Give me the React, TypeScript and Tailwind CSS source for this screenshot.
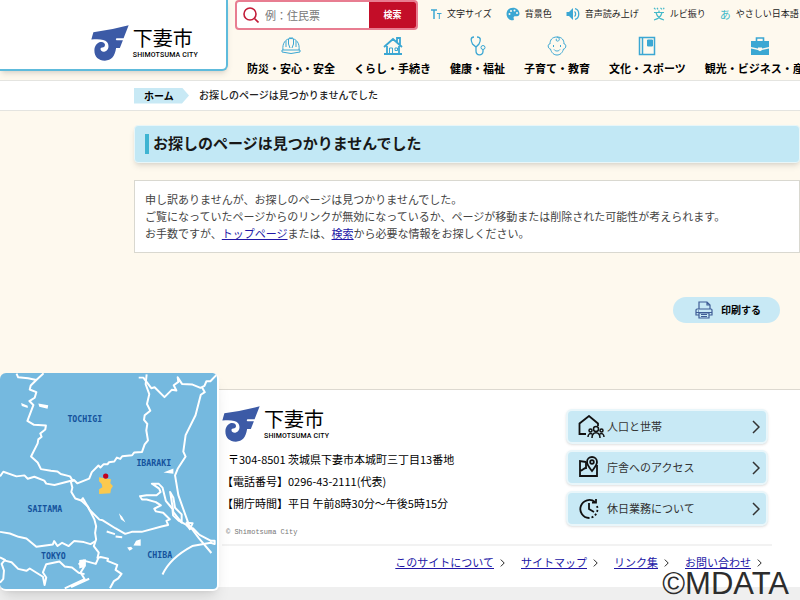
import type { ReactNode } from "react";

const LINE = "#3ba7d3";

function CityLogo() {
  return (
    <span className="flex items-center gap-1">
      <svg viewBox="277 52 112 106" className="h-9 w-[38px] shrink-0" aria-hidden="true">
        <path
          fill="#3c5aa6"
          d="M284 73 Q338 67 388 53 L373 91 H352 Q348 94 352 97 H371 L362 120 H351 C347 145 337 157 318 157 C299 157 287 145 287 127 C287 113 295 104 305 102 C315 101 321 108 317 115 C313 119 307 116 305 121 C304 128 311 132 318 130 C329 127 332 112 324 102 C317 95 304 93 278 95 Z"
        />
      </svg>
      <span className="flex flex-col text-black">
        <span className="text-[20px] leading-6 font-normal">下妻市</span>
        <span className="font-[Roboto,sans-serif] text-[7px] leading-[10px] font-medium tracking-wide whitespace-nowrap">SHIMOTSUMA CITY</span>
      </span>
    </span>
  );
}

// ---- header tools ----

const tools: { label: string; icon: ReactNode }[] = [
  {
    label: "文字サイズ",
    icon: (
      <svg viewBox="0 0 12 12" className="h-3 w-3" fill="none" stroke={LINE}>
        <path d="M1 2h6M4 2v9" strokeWidth="1.5" />
        <path d="M7 5.5h4.500M9.300 5.500V11" />
      </svg>
    ),
  },
  {
    label: "背景色",
    icon: (
      <svg viewBox="0 0 14 14" className="h-3.5 w-3.5">
        <path fill={LINE} d="M7 .7C3 .7.500 3.600.500 7c0 3.500 2.700 6.300 6 6.300 1.400 0 1.700-1 1.200-1.900C7.200 10.300 8 9.300 9.100 9.300h2c1.500 0 2.400-1 2.400-2.500C13.500 3.200 10.600.7 7 .7Z" />
        <g fill="#fef9ee">
          <circle cx="3.500" cy="7" r="1" />
          <circle cx="5" cy="3.900" r="1" />
          <circle cx="8.500" cy="3.500" r="1" />
          <circle cx="11" cy="6" r="1" />
        </g>
      </svg>
    ),
  },
  {
    label: "音声読み上げ",
    icon: (
      <svg viewBox="0 0 14 14" className="h-3.5 w-3.5" fill="none" stroke={LINE}>
        <path d="M.5 5H3l4-4v12L3 9H.5Z" fill={LINE} stroke="none" />
        <path d="M8.500 4.500c1.500 1 1.500 4 0 5M9 1.700c5 1 5 9.600 0 10.600" strokeWidth="1.300" />
      </svg>
    ),
  },
  {
    label: "ルビ振り",
    icon: (
      <svg viewBox="0 0 12 14" className="h-3.5 w-3" fill="none" stroke="#43b9c9" strokeWidth="1.200">
        <path d="M1 .8l1.500 1.500M4 .8l1 1.500M7.500.8L9 2.300M10.500.8l.5 1.500M1 5.500h10M6 3.500v2M9 5.500C8 9.500 5 12 1 13M3 5.500c1 4 4 6.500 8 7.500" />
      </svg>
    ),
  },
  { label: "やさしい日本語", icon: <span className="text-[11px] text-[#43b9c9]">あ</span> },
];

// ---- main navigation ----

const navItems: { label: string; icon: ReactNode }[] = [
  {
    label: "防災・安心・安全",
    icon: <path d="M1 14h18v2q-9 3-18 0ZM2 14C1 7 5 2.500 10 2.500s9 4.500 8 11.500M7.500 3v5l1.500 4M12.500 3v5L11 12M8 2h4M5 5v6M15 5v6" />,
  },
  {
    label: "くらし・手続き",
    icon: (
      <>
        <path d="M1 11L10 3l9 8M14 6V2h3v7M4 10v8M16 10v8M1 18h18" strokeWidth="1.800" />
        <path d="M6.500 18v-6H9.500v6M12 12h2.500v2.500H12Z" />
      </>
    ),
  },
  {
    label: "健康・福祉",
    icon: (
      <>
        <path d="M6 1C2 1 3 5 4.500 8L8 11l3-3c2-4 2-7-2-7M8 11v4c0 5 7 5 7 .5v-2" strokeWidth="1.300" />
        <circle cx="15" cy="11.500" r="2" />
      </>
    ),
  },
  {
    label: "子育て・教育",
    icon: (
      <>
        <path d="M10 1C5 1 3 4 3 8c-3 0-2 5 .5 5 1 4 3.500 6 6.500 6s5.500-2 6.500-6C19 13 20 8 17 8c0-4-2-7-7-7Z" />
        <path d="M10 1c4 1 2 5 0 4-1.500-.5-1-2 0-2M6.500 9v2M13.500 9v2M7 13.500c1.500 2 4.500 2 6 0" />
      </>
    ),
  },
  {
    label: "文化・スポーツ",
    icon: (
      <>
        <path d="M2.500 1.500h15v17h-15ZM5.500 1.500v17" strokeWidth="1.500" />
        <path d="M10.500 4h5v6h-5Z" fill={LINE} />
      </>
    ),
  },
  {
    label: "観光・ビジネス・産業",
    icon: (
      <>
        <path d="M6.500 5V2h7v3" strokeWidth="1.600" />
        <path d="M1 5h18v6l-7 1.500v-1H8v1L1 11ZM1 12.500l7 1.500c1 1.500 3 1.500 4 0l7-1.500V19H1Z" fill={LINE} stroke="none" />
      </>
    ),
  },
];

function SiteHeader() {
  return (
    <header className="flex h-20 overflow-hidden">
      <a href="#" className="flex h-[71px] w-[228px] shrink-0 justify-end rounded-br-md border-r-2 border-b-2 border-[#5ebbdc] bg-white pt-[17px] pr-7 shadow-md">
        <CityLogo />
      </a>
      <div className="min-w-0 flex-1 whitespace-nowrap">
        <div className="flex h-[30px] items-center pl-[7px]">
          <form className="flex h-[30px] w-[183px] shrink-0 overflow-hidden rounded border-2 border-[#e87d91] bg-white">
            <label htmlFor="q" className="flex w-7 items-center justify-center">
              <svg viewBox="0 0 16 16" className="h-4 w-4" fill="none" stroke="#c21b38" strokeWidth="1.600" aria-label="検索">
                <circle cx="7" cy="7" r="6" />
                <path d="M11.500 11.500L15.500 15.500" />
              </svg>
            </label>
            <input id="q" type="text" placeholder="例：住民票" className="min-w-0 flex-1 text-[11px] outline-none placeholder:text-[#777]" />
            <button type="button" className="w-[47px] bg-[#c30d28] text-[9px] font-bold text-white">検索</button>
          </form>
          <ul className="ml-3 flex items-center gap-3.5 pb-0.5 text-[9px] text-[#222]">
            {tools.map((t) => (
              <li key={t.label} className="shrink-0">
                <a href="#" className="flex items-center gap-[5px]">
                  {t.icon}
                  {t.label}
                </a>
              </li>
            ))}
          </ul>
        </div>
        <nav className="pt-1.5 pl-[19px]">
          <ul className="flex gap-[19px]">
            {navItems.map((n) => (
              <li key={n.label} className="shrink-0">
                <a href="#" className="flex flex-col items-center gap-1 text-[11px] leading-4 font-bold text-black">
                  <svg viewBox="0 0 20 20" className="h-5 w-5" fill="none" stroke={LINE}>
                    {n.icon}
                  </svg>
                  {n.label}
                </a>
              </li>
            ))}
          </ul>
        </nav>
      </div>
    </header>
  );
}

function AreaMap() {
  return (
    <svg viewBox="0 22 657 654" className="h-[218px] w-[219px] rounded-md border-r-2 border-b-2 border-white bg-[#75b9df] shadow-lg" role="img" aria-label="下妻市の位置">
      <g fill="none" stroke="#fff" strokeWidth="6" strokeLinejoin="round">
        <path d="M50 24l5 11 30 3 25 5 22-20M110 43L93 60l-3 12 20 8-5 17-16 10 12 12-18 48 20 12 36 2-2 12-15 12 4 10-10 8-2 12-20 40 20 18 10 20 30 5 20 2 10 8 28 7 10 16" />
        <path d="M0 335l10-14 40 14 24-3 10 10 20-6 30 12 6 9 25 4 47-12 12-3 10 10 36-14 8-20 20-20 6 6 10-10h12l4-6 16-2 8-12 10 4 6-8 30-3 6-8 24-2 8-23 10-12-5-30 3-20-10-12 2-14 17-14-10-20 7-30-11-30 3-30" />
        <path d="M420 36h14l24 32 10-3 30 30 22-22 14 2-8-16 14-10-2-14 13 20 32 2 24 10 12-6 6-14h12l20-21M612 66l8 14-12 8-16 62-30 60-7 50 7 15-24 37-8 20 10 60 32 90 30 40 38 45" />
        <path d="M214 349l5 20-3 13 12 20 18 6 5-7 20 35 30 30 10 2 38 24 30 17 20-6h30l60-16 20-5-5-12 10-5-20-20-22-4-5-8 20-10-15-10-28-8h-14l-6-10 20-3h30l12-10-4-10-22-15h20l12 12 10 40 20 24 2 20 18 17 20 10 12 12h10l20 20 35 18h11v10l-12-4-56 10c-28 15-70 42-90 86" />
        <path d="M246 408l20 18 20 40 5 20-3 20 3 20-7 20 15 20-4 16 10-3 22 5-2 7 30 12-5 15 18 12-10 14-13 8-12 22M298 582l-8 18-36-10-14 10 14 10-10 16 12 20-60 28M215 670l55-25" />
        <path d="M0 503l30 5 26 10 24 5 30 25 50-7 4-10 10 15 14-10 20 10 16-15 30 3 20 6 14-8M0 580l15 8-10 12 7 20-2 25-10 12M15 590l20 5 20 20 25 6 10-7 40 25 5 25 5-23-10-15 10-25 40-8 16 15 22 3 20 16 18 4" />
        <path d="M515 382l10 18 5 30 20 20v25l-25-32ZM565 475l10 20 8-18ZM323 502l25 8M350 517l20 2" />
      </g>
      <g fill="#fff">
        <path d="M64 113l20 8v7l-18-6ZM116 114l30 6-2 10-25-6ZM495 323l30-12v16ZM360 447l10 10 10 18-14-10ZM385 550l12-2 5 6-10 6ZM412 530l14-5v20l-22-1ZM240 588l20-2v22l-20 6Z" />
      </g>
      <path fill="#fbc94e" d="M300 338l16 3 20 3-2 12 8 8-6 10-2 12-34 2v-14l10-6-2-10-8-8Z" />
      <circle cx="320" cy="334" r="8" fill="#c4001c" />
      <g fill="#14529c" fontFamily="'DejaVu Sans Mono','Liberation Mono',monospace" fontSize="25" fontWeight="700">
        <text x="204" y="170">TOCHIGI</text>
        <text x="413" y="303">IBARAKI</text>
        <text x="83" y="443">SAITAMA</text>
        <text x="124" y="584">TOKYO</text>
        <text x="446" y="583">CHIBA</text>
      </g>
    </svg>
  );
}

// ---- footer ----

const quickLinks: { label: string; icon: ReactNode }[] = [
  {
    label: "人口と世帯",
    icon: (
      <>
        <path d="M8 19H1.500V8.500L11 1l9 7.500V11" />
        <g strokeWidth="1.500">
          <circle cx="18" cy="14" r="2.500" />
          <circle cx="12.500" cy="15.500" r="1.500" />
          <circle cx="23.500" cy="15.500" r="1.500" />
          <path d="M14 23c0-7 8-7 8 0M10 22c0-3 2-4 4-3M26 22c0-3-2-4-4-3" />
        </g>
      </>
    ),
  },
  {
    label: "庁舎へのアクセス",
    icon: (
      <>
        <path d="M8 6L2 5v15h17V9M2 15c3-1 4-3 6-3V6" />
        <path d="M14 15c-3-4-5-6-5-9a5 5 0 0 1 10 0c0 3-2 5-5 9Z" />
        <circle cx="14" cy="6" r="1.800" />
      </>
    ),
  },
  {
    label: "休日業務について",
    icon: (
      <>
        <path d="M17 5A9 9 0 1 0 11 21" />
        <path d="M19 9A9 9 0 0 1 11 21" strokeDasharray="2 2" />
        <path d="M11 6v6l5 3M14 5.500h4V2" />
      </>
    ),
  },
];

const siteLinks = ["このサイトについて", "サイトマップ", "リンク集", "お問い合わせ"];

function Chevron({ className }: { className: string }) {
  return (
    <svg viewBox="0 0 8 14" className={className} fill="none" stroke="currentColor" strokeWidth="1.500">
      <path d="M1 1l6 6-6 6" />
    </svg>
  );
}

function SiteFooter() {
  return (
    <footer className="relative mt-[66px] border-t border-[#ddd9d0] bg-white pl-[222px]">
      <div className="absolute -top-[17px] left-0">
        <AreaMap />
      </div>
      <div className="mr-7 flex justify-between border-b-2 border-[#f2f2f2] pb-1">
        <div className="pt-4">
          <CityLogo />
          <address className="pt-1.5 pl-1 text-[11px] leading-[22px] whitespace-nowrap text-black not-italic">
            <p className="pl-0.5">〒304-8501 茨城県下妻市本城町三丁目13番地</p>
            <p className="-ml-1">【電話番号】0296-43-2111(代表)</p>
            <p className="-ml-1">【開庁時間】平日 午前8時30分～午後5時15分</p>
          </address>
          <small className="block pt-2.5 pl-1 font-['Liberation_Mono',monospace] text-[7px] leading-4 text-[#777]">© Shimotsuma City</small>
        </div>
        <ul className="mr-1 flex w-[202px] flex-col gap-1.5 pt-[19px]">
          {quickLinks.map((q) => (
            <li key={q.label}>
              <a href="#" className="flex h-[35px] items-center rounded-md border-2 border-[#e9f6fa] bg-[#c8e9f5] pr-1.5 pl-2.5 text-[11px] text-[#333] shadow-sm">
                <svg viewBox="0 0 27 24" className="h-6 w-[27px]" fill="none" stroke="#111" strokeWidth="1.800">
                  {q.icon}
                </svg>
                <span className="ml-0.5 flex-1">{q.label}</span>
                <Chevron className="h-3.5 w-2" />
              </a>
            </li>
          ))}
        </ul>
      </div>
      <ul className="flex h-[41px] items-center justify-end gap-4 pr-[38px] pb-2 text-[11px] whitespace-nowrap">
        {siteLinks.map((s) => (
          <li key={s} className="flex items-center gap-1.5">
            <a href="#" className="text-[#2217a6] underline">{s}</a>
            <Chevron className="h-2 w-[5px]" />
          </li>
        ))}
      </ul>
    </footer>
  );
}

export default function App() {
  return (
    <div className="relative min-h-screen overflow-hidden bg-[#efefef] font-['Noto_Sans_CJK_JP',sans-serif]">
      <div className="bg-[#fef9ee]">
        <SiteHeader />
        <nav className="flex h-[31px] items-center border-y border-[#e4e4e0] bg-white pl-[134px] text-[10px] font-medium text-[#222]">
          <a href="#" className="flex h-4 w-[55px] items-center bg-[#c8e9f5] pl-2.5 font-bold text-black [clip-path:polygon(0_0,48px_0,100%_50%,48px_100%,0_100%)]">ホーム</a>
          <span className="ml-2.5 pb-0.5">お探しのページは見つかりませんでした</span>
        </nav>
        <main className="pt-3.5 pl-[134px]">
          <h1 className="flex h-[38px] items-center rounded border border-[#e9f6f8] bg-[#c2e8f5] pl-2.5 text-[15px] font-bold text-[#181818] shadow-md">
            <span className="mr-1 h-5 w-1 bg-[#3eb4d2]" />
            <span className="pb-0.5">お探しのページは見つかりませんでした</span>
          </h1>
          <p className="mt-[17px] border border-[#d9d8d0] bg-white px-2.5 py-[10px] text-[11px] leading-[17px] text-[#444]">
            申し訳ありませんが、お探しのページは見つかりませんでした。
            <br />
            ご覧になっていたページからのリンクが無効になっているか、ページが移動または削除された可能性が考えられます。
            <br />
            お手数ですが、<a href="#" className="text-[#2217a6] underline">トップページ</a>または、<a href="#" className="text-[#2217a6] underline">検索</a>から必要な情報をお探しください。
          </p>
          <div className="mt-11 mr-5 flex justify-end">
            <button type="button" className="flex h-[26px] w-[107px] items-center justify-end gap-2 rounded-full bg-[#c8e9f5] pr-[19px] text-[10px] font-bold text-black">
              <svg viewBox="0 0 18 18" className="h-[18px] w-[18px]" fill="none" stroke="#3f5d96" strokeWidth="1.200">
                <path d="M4 8V1h8l3 3v4M12 1v3h3M4 14H1V9q0-1 1-1h14q1 0 1 1v5h-3M4 12h10v5H4ZM6 13.500h6M6 15.500h6M3 10h1M1 11.500h16" />
              </svg>
              <span className="pb-0.5">印刷する</span>
            </button>
          </div>
        </main>
        <SiteFooter />
      </div>
      <span className="absolute right-[11px] bottom-0 font-['Liberation_Sans',sans-serif] text-[31px] leading-8 text-[#2d2d2d]">©MDATA</span>
    </div>
  );
}
